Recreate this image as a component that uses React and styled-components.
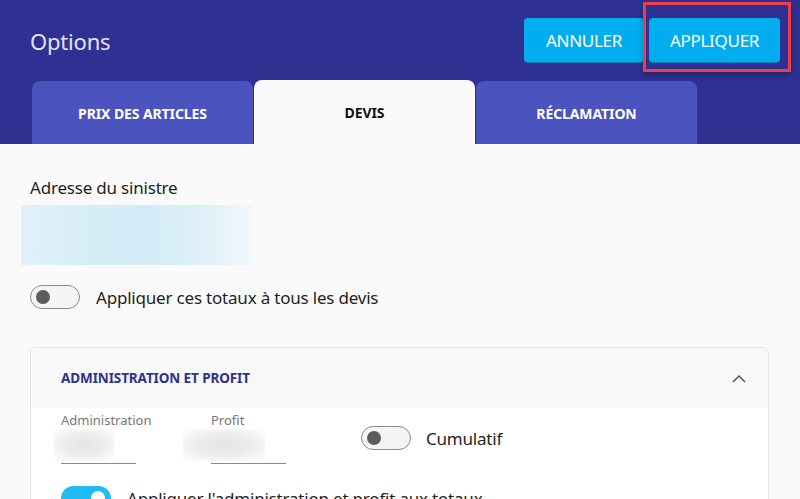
import React from "react";
import styled, { createGlobalStyle } from "styled-components";

const GlobalStyle = createGlobalStyle`
  html, body { margin: 0; padding: 0; background: #fafafa; }
  body { font-family: "Noto Sans", "Open Sans", sans-serif; overflow: hidden; }
  * { box-sizing: border-box; }
`;

const Page = styled.div`
  width: 800px;
  height: 499px;
  overflow: hidden;
  background: #fafafa;
`;

const Header = styled.header`
  background: #2e3192;
  height: 144px;
  display: flex;
  flex-direction: column;
`;

const TopRow = styled.div`
  height: 80px;
  display: flex;
  align-items: center;
  justify-content: space-between;
  padding: 0 20px 0 30px;
`;

const Title = styled.h1`
  margin: 0;
  font-size: 22px;
  font-weight: 400;
  color: #e2e2f4;
  letter-spacing: -0.2px;
  padding-top: 2px;
`;

const Actions = styled.div`
  display: flex;
  gap: 5px;
`;

const Highlight = styled.div`
  position: relative;
`;

const Outline = styled.div`
  position: absolute;
  left: -6px;
  right: -11px;
  top: -16px;
  bottom: -10px;
  border: 3px solid #ec3f48;
  box-shadow: 0 3px 6px rgba(0, 0, 0, 0.25);
  pointer-events: none;
`;

const ActionButton = styled.button`
  height: 44px;
  width: ${(p) => p.$w}px;
  border: none;
  border-radius: 4px;
  background: #00aeef;
  color: #fff;
  font-family: inherit;
  font-size: 17px;
  letter-spacing: -0.3px;
  box-shadow: 0 1px 0 #0a7fb0;
  padding: 0;
  cursor: pointer;
`;

const Tabs = styled.nav`
  height: 64px;
  display: flex;
  align-items: flex-end;
  gap: 1px;
  padding-left: 32px;
`;

const Tab = styled.div`
  width: 221px;
  height: ${(p) => (p.$active ? 64 : 63)}px;
  border-radius: 8px 8px 0 0;
  background: ${(p) => (p.$active ? "#fafafa" : "#4b53bf")};
  color: ${(p) => (p.$active ? "#111" : "#fff")};
  font-size: 14px;
  font-weight: 700;
  display: flex;
  align-items: center;
  justify-content: center;
  letter-spacing: -0.1px;
  padding-top: 1px;
`;

const Content = styled.main`
  padding: 32px 31px 0 30px;
`;

const FieldLabel = styled.div`
  font-size: 17px;
  color: #1e1e1e;
  line-height: 24px;
  letter-spacing: -0.2px;
`;

const BlurredAddress = styled.div`
  margin: 5px 0 0 -9px;
  width: 231px;
  height: 60px;
  background: linear-gradient(
    90deg,
    #e0f1f9 0%,
    #d6edf8 30%,
    #d4ecf7 55%,
    #dff0f8 80%,
    #f2f8fb 100%
  );
`;

const ToggleRow = styled.div`
  display: flex;
  align-items: center;
  gap: ${(p) => p.$gap || 16}px;
  margin-top: ${(p) => p.$mt || 0}px;
`;

const Switch = styled.span`
  position: relative;
  flex: none;
  width: 50px;
  height: 24px;
  border-radius: 12px;
  border: 1.5px solid ${(p) => (p.$on ? "#1ebcf3" : "#8a8a8a")};
  background: ${(p) => (p.$on ? "#1ebcf3" : "#f4f4f4")};
  &::after {
    content: "";
    position: absolute;
    top: 3.5px;
    left: ${(p) => (p.$on ? 29 : 5)}px;
    width: 14px;
    height: 14px;
    border-radius: 50%;
    background: ${(p) => (p.$on ? "#fff" : "#5c5c5c")};
  }
`;

const ToggleLabel = styled.span`
  font-size: 17px;
  color: #1e1e1e;
  letter-spacing: -0.2px;
  white-space: nowrap;
`;

const Card = styled.section`
  margin-top: 38px;
  border: 1px solid #e5e5e5;
  border-radius: 6px;
  background: #fff;
  overflow: hidden;
`;

const CardHeader = styled.div`
  height: 60px;
  background: #f8f8f8;
  display: flex;
  align-items: center;
  justify-content: space-between;
  padding: 0 22px 0 30px;
`;

const CardTitle = styled.h2`
  margin: 0;
  font-size: 13.5px;
  font-weight: 700;
  color: #2e3192;
  letter-spacing: -0.1px;
`;

const CardBody = styled.div`
  padding: 3px 30px 0 30px;
`;

const FieldsRow = styled.div`
  display: flex;
  align-items: flex-start;
`;

const SmallField = styled.div`
  width: 150px;
  display: flex;
  flex-direction: column;
`;

const SmallLabel = styled.label`
  font-size: 13px;
  color: #777;
  line-height: 18px;
`;

const Input = styled.div`
  position: relative;
  width: 75px;
  height: 35px;
  border-bottom: 1px solid #8a8a8a;
  &::before {
    content: "";
    position: absolute;
    left: ${(p) => p.$blurLeft}px;
    top: 0;
    width: ${(p) => p.$blurW}px;
    height: 32px;
    background: radial-gradient(ellipse at center, #e4e4e4 0%, #ececec 45%, rgba(250,250,250,0) 100%);
  }
`;

const CumulWrap = styled.div`
  padding-top: 15px;
`;

export default function App() {
  return (
    <Page>
      <GlobalStyle />
      <Header>
        <TopRow>
          <Title>Options</Title>
          <Actions>
            <ActionButton $w={120}>ANNULER</ActionButton>
            <Highlight>
              <ActionButton $w={131}>APPLIQUER</ActionButton>
              <Outline />
            </Highlight>
          </Actions>
        </TopRow>
        <Tabs>
          <Tab>PRIX DES ARTICLES</Tab>
          <Tab $active>DEVIS</Tab>
          <Tab>RÉCLAMATION</Tab>
        </Tabs>
      </Header>
      <Content>
        <FieldLabel>Adresse du sinistre</FieldLabel>
        <BlurredAddress />
        <ToggleRow $mt={20}>
          <Switch />
          <ToggleLabel>Appliquer ces totaux à tous les devis</ToggleLabel>
        </ToggleRow>
        <Card>
          <CardHeader>
            <CardTitle>ADMINISTRATION ET PROFIT</CardTitle>
            <svg width="14" height="9" viewBox="0 0 14 9" fill="none">
              <path d="M1 8 L7 2 L13 8" stroke="#555" strokeWidth="1.5" />
            </svg>
          </CardHeader>
          <CardBody>
            <FieldsRow>
              <SmallField>
                <SmallLabel>Administration</SmallLabel>
                <Input $blurLeft={-7} $blurW={60} />
              </SmallField>
              <SmallField>
                <SmallLabel>Profit</SmallLabel>
                <Input $blurLeft={-28} $blurW={82} />
              </SmallField>
              <CumulWrap>
                <ToggleRow $gap={15}>
                  <Switch />
                  <ToggleLabel>Cumulatif</ToggleLabel>
                </ToggleRow>
              </CumulWrap>
            </FieldsRow>
            <ToggleRow $mt={22}>
              <Switch $on />
              <ToggleLabel>Appliquer l'administration et profit aux totaux</ToggleLabel>
            </ToggleRow>
          </CardBody>
        </Card>
      </Content>
    </Page>
  );
}
